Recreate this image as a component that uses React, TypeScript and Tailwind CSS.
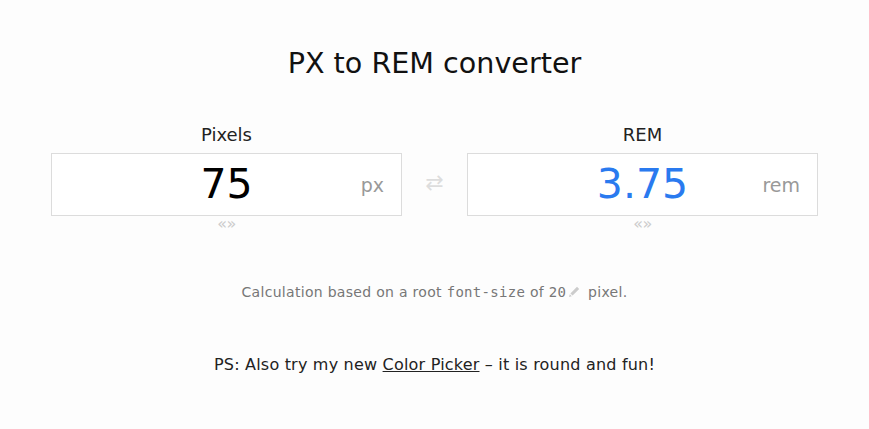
function Field({
  label,
  value,
  unit,
  valueClass,
}: {
  label: string;
  value: string;
  unit: string;
  valueClass: string;
}) {
  return (
    <div className="flex w-[351px] flex-col items-center">
      <div className="text-[18px] leading-[24px] text-[#222]">{label}</div>
      <div className="relative mt-[6px] flex h-[63px] w-full items-center justify-center border border-[#dcdcdc] bg-white">
        <span className={`text-[41px] leading-none ${valueClass}`}>{value}</span>
        <span className="absolute right-[17px] top-1/2 -translate-y-1/2 text-[19px] text-[#999]">
          {unit}
        </span>
      </div>
      <div className="mt-[1px] text-[16px] leading-[14px] tracking-[-0.5px] text-[#ccc]">«»</div>
    </div>
  );
}

export default function App() {
  return (
    <div
      className="flex min-h-[429px] flex-col items-center bg-[#fdfdfd] pt-[45px] text-[#222]"
      style={{ fontFamily: '"DejaVu Sans", Verdana, sans-serif' }}
    >
      {/* Title */}
      <h1 className="text-[28.6px] leading-[36px] text-[#111]">PX to REM converter</h1>

      {/* Converter */}
      <div className="mt-[42px] flex items-start">
        <Field label="Pixels" value="75" unit="px" valueClass="text-black" />
        <div className="flex w-[65px] justify-center pt-[48px] text-[22px] leading-[24px] text-[#ddd]">
          ⇄
        </div>
        <Field label="REM" value="3.75" unit="rem" valueClass="text-[#2a7aef]" />
      </div>

      {/* Note */}
      <p className="mt-[51px] text-[14px] leading-[20px] tracking-[0.3px] text-[#777]">
        Calculation based on a root{" "}
        <span className="font-['DejaVu_Sans_Mono',monospace]">font-size</span> of{" "}
        <span className="font-['DejaVu_Sans_Mono',monospace]">20</span>
        <svg viewBox="0 0 12 12" className="ml-[2px] mr-[3px] inline-block h-[12px] w-[12px] align-[-1px]">
          <path d="M9 .8l2.2 2.2-6.6 6.6-2.2-2.2zM1.8 8.2l2 2-2.8.8z" fill="#ccc" />
        </svg>{" "}
        pixel.
      </p>

      {/* PS */}
      <p className="mt-[52px] text-[16px] leading-[22px] tracking-[0.2px] text-[#222]">
        PS: Also try my new{" "}
        <a className="underline decoration-[#222]" href="#">
          Color Picker
        </a>{" "}
        – it is round and fun!
      </p>
    </div>
  );
}
